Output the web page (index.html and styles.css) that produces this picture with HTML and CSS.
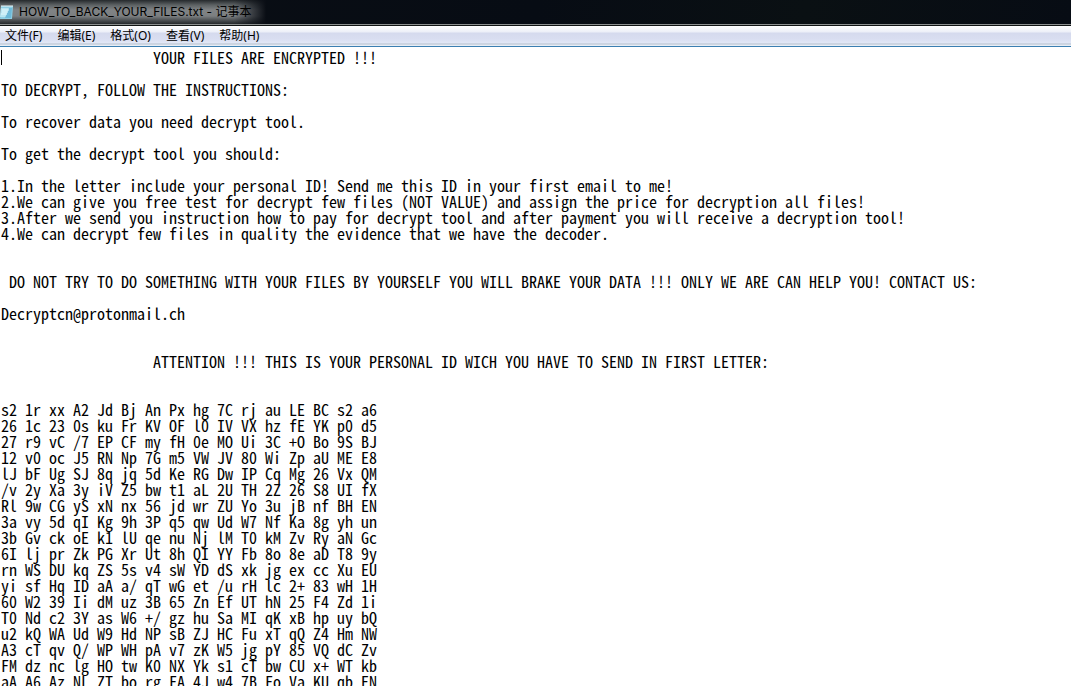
FILE: index.html
```html
<!DOCTYPE html>
<html lang="zh-CN">
<head>
<meta charset="utf-8">
<title>HOW_TO_BACK_YOUR_FILES.txt - 记事本</title>
<link rel="stylesheet" href="styles.css">
</head>
<body>
<div class="window">
<header class="titlebar">
<div class="caption">
<svg class="app-icon" viewBox="0 0 14 16" aria-hidden="true">
<path d="M1 2h12l-1 13H0z" fill="#8fcfe4"/>
<path d="M1 4h10l-1 9H0z" fill="#b9e6f2"/>
<path d="M9 4h3l-1 10H5z" fill="#6db9d8"/>
<path d="M2 6h7M2 8h6M1 10h6" stroke="#e4f7fb" stroke-width="1"/>
<path d="M2 1v2M4 1v2M6 1v2M8 1v2M10 1v2M12 1v2" stroke="#e8f4f6" stroke-width="1"/>
</svg>
<h1 class="title">HOW_TO_BACK_YOUR_FILES.txt - 记事本</h1>
</div>
</header>
<nav class="menubar" aria-label="菜单">
<button class="menu" type="button">文件(F)</button>
<button class="menu" type="button">编辑(E)</button>
<button class="menu" type="button">格式(O)</button>
<button class="menu" type="button">查看(V)</button>
<button class="menu" type="button">帮助(H)</button>
</nav>
<main class="editor">
<textarea class="text" aria-label="文本" spellcheck="false" wrap="off">                   YOUR FILES ARE ENCRYPTED !!!

TO DECRYPT, FOLLOW THE INSTRUCTIONS:

To recover data you need decrypt tool.

To get the decrypt tool you should:

1.In the letter include your personal ID! Send me this ID in your first email to me!
2.We can give you free test for decrypt few files (NOT VALUE) and assign the price for decryption all files!
3.After we send you instruction how to pay for decrypt tool and after payment you will receive a decryption tool!
4.We can decrypt few files in quality the evidence that we have the decoder.


 DO NOT TRY TO DO SOMETHING WITH YOUR FILES BY YOURSELF YOU WILL BRAKE YOUR DATA !!! ONLY WE ARE CAN HELP YOU! CONTACT US:

Decryptcn@protonmail.ch


                   ATTENTION !!! THIS IS YOUR PERSONAL ID WICH YOU HAVE TO SEND IN FIRST LETTER:


s2 1r xx A2 Jd Bj An Px hg 7C rj au LE BC s2 a6
26 1c 23 0s ku Fr KV OF l0 IV VX hz fE YK p0 d5
27 r9 vC /7 EP CF my fH 0e MO Ui 3C +O Bo 9S BJ
12 v0 oc J5 RN Np 7G m5 VW JV 80 Wi Zp aU ME E8
lJ bF Ug SJ 8q jq 5d Ke RG Dw IP Cq Mg 26 Vx QM
/v 2y Xa 3y iV Z5 bw t1 aL 2U TH 2Z 26 S8 UI fX
Rl 9w CG yS xN nx 56 jd wr ZU Yo 3u jB nf BH EN
3a vy 5d qI Kg 9h 3P q5 qw Ud W7 Nf Ka 8g yh un
3b Gv ck oE k1 lU qe nu Nj lM T0 kM Zv Ry aN Gc
6I lj pr Zk PG Xr Ut 8h QI YY Fb 8o 8e aD T8 9y
rn WS DU kq ZS 5s v4 sW YD dS xk jg ex cc Xu EU
yi sf Hq ID aA a/ qT wG et /u rH lc 2+ 83 wH 1H
60 W2 39 Ii dM uz 3B 65 Zn Ef UT hN 25 F4 Zd 1i
T0 Nd c2 3Y as W6 +/ gz hu Sa MI qK xB hp uy bQ
u2 kQ WA Ud W9 Hd NP sB ZJ HC Fu xT qQ Z4 Hm NW
A3 cT qv Q/ WP WH pA v7 zK W5 jg pY 85 VQ dC Zv
FM dz nc lg HO tw K0 NX Yk s1 cT bw CU x+ WT kb
aA A6 Az NL ZT bo rg FA 4J w4 7B Fo Va KU qb EN</textarea>
<span class="caret"></span>
</main>
</div>
</body>
</html>
```
FILE: styles.css
```css
* {
  box-sizing: border-box;
}

body {
  margin: 0;
  background: #fff;
  color: #000;
  font-family: "Noto Sans", "Noto Sans CJK SC", sans-serif;
}

.window {
  display: flex;
  flex-direction: column;
  height: 100vh;
  overflow: hidden;
}

.titlebar {
  flex: none;
  display: flex;
  height: 26px;
  background: linear-gradient(100deg, #0a0e14, #070c14 50%, #0a1013 75%, #070c14);
  border-bottom: 1px solid #101414;
  box-shadow: inset 0 -1px #8b8f8f;
}

.caption {
  display: flex;
  align-items: center;
  gap: 5px;
  height: 24px;
  padding-right: 14px;
  background:
    linear-gradient(90deg, transparent 88%, #090d14),
    linear-gradient(#25292c, #5c6163 5px, #808385 10px, #7c7f81 16px, #44484b 21px, #25292c);
}

.app-icon {
  width: 14px;
  height: 16px;
}

.title {
  margin: 0;
  font-family: Inter, "Noto Sans CJK SC", sans-serif;
  font-size: 12px;
  font-weight: 400;
  line-height: 20px;
  white-space: nowrap;
}

.menubar {
  flex: none;
  display: flex;
  gap: 15px;
  height: 21px;
  padding-left: 5px;
  background: linear-gradient(#fff, #eceff8 6px, #d5daee 7px, #d9def1 13px, #e2e8f6 17px, #b5bfcd 18px, #e7edf5 19px);
  border-bottom: 1px solid #3c7fb1;
}

.menu {
  padding: 0;
  border: 0;
  background: none;
  color: #000;
  font-family: "Noto Sans", "Noto Sans CJK SC", sans-serif;
  font-size: 12px;
  line-height: 18px;
}

.editor {
  position: relative;
  flex: 1;
  min-height: 0;
}

.text {
  display: block;
  width: 100%;
  height: 100%;
  padding: 2px 0 0 1px;
  border: 0;
  outline: 0;
  resize: none;
  overflow: hidden;
  background: #fff;
  color: #000;
  font-family: "Noto Sans Mono CJK SC", "Liberation Mono", monospace;
  font-size: 16px;
  line-height: 16px;
}

.caret {
  position: absolute;
  top: 3px;
  left: 1px;
  width: 1px;
  height: 15px;
  background: #000;
}
```
